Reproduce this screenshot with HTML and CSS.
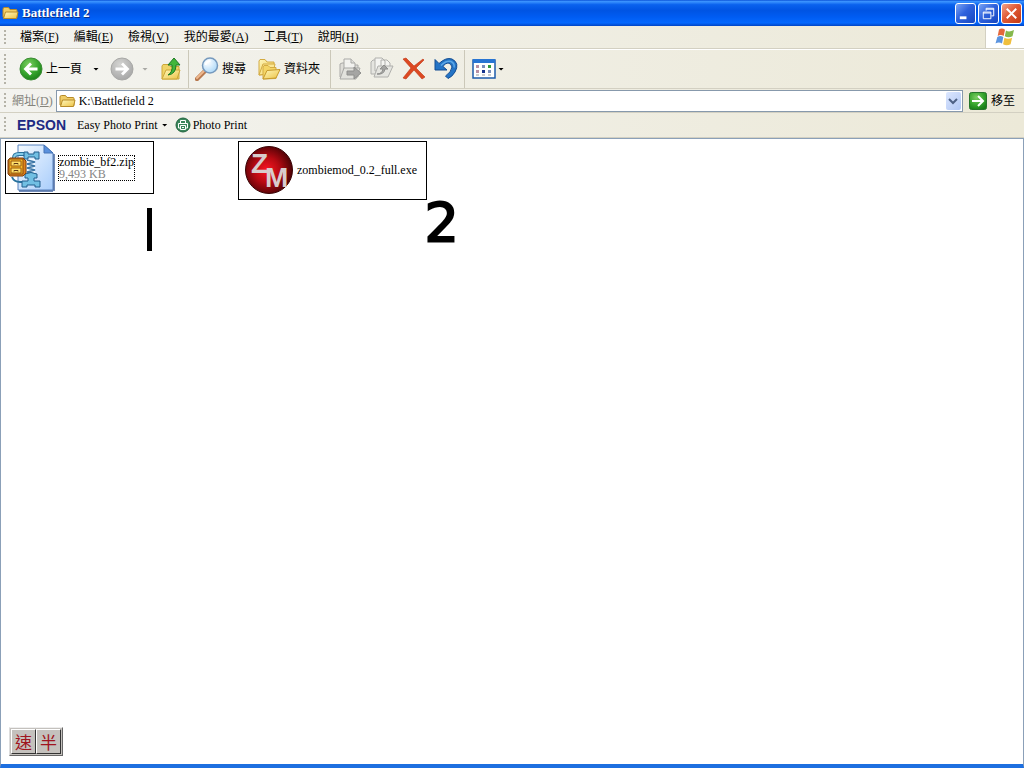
FILE: index.html
```html
<!DOCTYPE html>
<html lang="zh-Hant">
<head>
<meta charset="utf-8">
<meta name="viewport" content="width=device-width, initial-scale=1">
<title>Battlefield 2</title>
<link rel="stylesheet" href="styles.css">
</head>
<body>
<svg class="defs" width="0" height="0" aria-hidden="true">
  <defs>
    <linearGradient id="gold" x1="0" y1="0" x2="1" y2="1"><stop offset="0" stop-color="#fff8bd"/><stop offset="1" stop-color="#ecc244"/></linearGradient>
    <radialGradient id="green" cx=".4" cy=".3" r=".75"><stop offset="0" stop-color="#7cce61"/><stop offset=".6" stop-color="#35a32c"/><stop offset="1" stop-color="#197d18"/></radialGradient>
    <radialGradient id="grey" cx=".4" cy=".3" r=".75"><stop offset="0" stop-color="#d4d4d2"/><stop offset="1" stop-color="#a5a5a5"/></radialGradient>
    <radialGradient id="lens" cx=".35" cy=".3" r=".8"><stop offset="0" stop-color="#fff"/><stop offset="1" stop-color="#a5d5f8"/></radialGradient>
    <linearGradient id="page" x1="0" y1="0" x2="1" y2="1"><stop offset="0" stop-color="#f4faff"/><stop offset="1" stop-color="#a9cdfb"/></linearGradient>
    <radialGradient id="red" cx=".45" cy=".5" r=".55"><stop offset="0" stop-color="#fa1620"/><stop offset=".5" stop-color="#b50a12"/><stop offset="1" stop-color="#4c0205"/></radialGradient>
    <symbol id="folder" viewBox="0 0 17 14">
      <path d="M1 11V3q0-1.500 1.500-1.500h4l1.500 2h6q1 0 1 1v7z" fill="#f0cd66" stroke="#b78b28"/>
      <path d="M1.500 12.500 3.500 6h12.500l-1.500 6.500z" fill="url(#gold)" stroke="#b78b28"/>
    </symbol>
  </defs>
</svg>

<div class="window">
  <header class="titlebar">
    <svg class="title-icon" viewBox="0 0 17 14"><use href="#folder"/></svg>
    <h1 class="title">Battlefield 2</h1>
    <div class="controls">
      <button class="control" aria-label="最小化"><svg viewBox="0 0 20 20"><path d="M4 13h7v3H4z" fill="#fff"/></svg></button>
      <button class="control" aria-label="還原"><svg viewBox="0 0 20 20" fill="none" stroke="#fff"><path d="M7.500 7V4.500h8v8H13M7.500 5.500h8M4.500 8.500h8v7h-8zM4.500 9.500h8"/></svg></button>
      <button class="control close" aria-label="關閉"><svg viewBox="0 0 20 20"><path d="m5 5 10 10M15 5 5 15" stroke="#fff" stroke-width="2"/></svg></button>
    </div>
  </header>

  <nav class="menubar">
    <span class="grip"></span>
    <div class="menus">
      <button class="menu">檔案(<u>F</u>)</button>
      <button class="menu">編輯(<u>E</u>)</button>
      <button class="menu">檢視(<u>V</u>)</button>
      <button class="menu">我的最愛(<u>A</u>)</button>
      <button class="menu">工具(<u>T</u>)</button>
      <button class="menu">說明(<u>H</u>)</button>
    </div>
    <div class="flag">
      <svg viewBox="0 0 20 18">
        <path d="M4 1.500q3-2 6 .2L8.700 8q-3-2-6 0z" fill="#e4683c"/>
        <path d="M11 2.500q3 2 8-.5l-1.500 6.200q-4 2-7.700 0z" fill="#85b84c"/>
        <path d="M2.300 9q3-2 6 0L7 15.500q-3-2-6.500 0z" fill="#5b94df"/>
        <path d="M9.400 9.800q3.600 2 7.700 0l-1.500 6.400q-4 2-7.500 0z" fill="#f0bf3d"/>
      </svg>
    </div>
  </nav>

  <div class="toolbar">
    <span class="grip"></span>
    <div class="group nav-group">
      <button class="tool"><svg class="icon" viewBox="0 0 24 24"><circle cx="12" cy="12" r="11" fill="url(#green)" stroke="#3c8c34"/><path d="M18.500 12H7M12 6.500 6.500 12l5.500 5.500" fill="none" stroke="#fff" stroke-width="2.800"/></svg>上一頁</button>
      <button class="drop" aria-label="上一頁清單"></button>
      <button class="tool" aria-label="下一頁" disabled><svg class="icon" viewBox="0 0 24 24"><circle cx="12" cy="12" r="11" fill="url(#grey)" stroke="#a8a8a6"/><path d="M5.500 12H17M12 6.500l5.500 5.500-5.500 5.500" fill="none" stroke="#fff" stroke-width="2.800"/></svg></button>
      <button class="drop faded" aria-label="下一頁清單" disabled></button>
      <button class="tool up" aria-label="上層"><svg class="icon" viewBox="0 0 24 24"><path d="M3 22V9l1-1.500h5l2 2h9V22z" fill="#f0d468" stroke="#cda739"/><path d="m3 22 4-9h14l-3 9z" fill="url(#gold)" stroke="#cda739"/><path d="M9 18q5-3 4-10H9l6-7 6 7h-4q0 9-8 10z" fill="#42b63b" stroke="#1e7922"/></svg></button>
    </div>
    <div class="group find-group">
      <button class="tool"><svg class="icon" viewBox="0 0 24 24"><path d="m10 14-8 8" stroke="#b87950" stroke-width="4.500" stroke-linecap="round"/><path d="m9 14-7 7" stroke="#efb98e" stroke-width="2" stroke-linecap="round"/><circle cx="15" cy="8.500" r="7.500" fill="url(#lens)" stroke="#7699bd" stroke-width="1.500"/><path d="M10.500 8q1-4 5-4" fill="none" stroke="#fff" stroke-width="2"/></svg>搜尋</button>
      <button class="tool"><svg class="icon" viewBox="0 0 24 24"><path d="M2 18V4l1-1.500h5l2 2.500h7v12z" fill="url(#gold)" stroke="#d3ab42"/><path d="m2 18 4-11h12l-2 9z" fill="#fbe793" stroke="#d3ab42"/><path d="M6 22V10l1-1.500h4l2 2h6v11z" fill="#f4d566" stroke="#d3ab42"/><path d="m6 22 4-8.500 13-1L19 21z" fill="url(#gold)" stroke="#c79a2c"/></svg>資料夾</button>
    </div>
    <div class="group edit-group">
      <button class="tool" aria-label="移至資料夾" disabled><svg class="icon" viewBox="0 0 24 24" stroke="#a9a9a6"><path d="M2 20V7l2-1h4l2 2h10v12z" fill="#deddd8"/><path d="M6 15V2h7l4 4v9z" fill="#f2f2ef"/><path d="M13 2v4h4M2 22l4-11h16l-4 11z" fill="#e2e2dd"/><path d="M9 14h7v-4l7 6-7 6v-4H9z" fill="#a5a5a3" stroke="#8e8e8c"/></svg></button>
      <button class="tool" aria-label="複製到資料夾" disabled><svg class="icon" viewBox="0 0 24 24" stroke="#b0b0ad"><path d="M1 17V5l2-2h5v14z" fill="#e5e5e0"/><path d="M5 14V1h7l3 3v10zM11 13V3h6l3 3v9z" fill="#f4f4f1"/><path d="M4 20 8 9h15l-5 11z" fill="#e5e5e0"/><path d="M7 17q5 0 6-5h-3l4-4 4 4h-3q-1 6-8 5z" fill="#a5a5a3" stroke="#8e8e8c"/></svg></button>
      <button class="tool" aria-label="刪除"><svg class="icon" viewBox="0 0 24 24"><path d="M1 2 4 1l8 8 9-7 1 1-8 8 9 9-3 2-8-9-8 9-3-1 8-10z" fill="#dd4922" stroke="#bd3413" stroke-width=".6"/></svg></button>
      <button class="tool" aria-label="復原"><svg class="icon" viewBox="0 0 24 24"><path d="M1 2.500 5 6.500Q12 0 18 2q8 4 3 13-3 5-7 6.500L11.500 19q6-4 6.500-9-1-4-4-4-3 0-5 3.500l4 3.500H1z" fill="#2474c6" stroke="#134d92"/><path d="M7 8.500q5-5 10-4 4 2 3 6" fill="none" stroke="#5ba7e6" stroke-width="1.500"/></svg></button>
    </div>
    <div class="group view-group">
      <button class="tool view" aria-label="檢視"><svg class="icon" viewBox="0 0 24 24"><path d="M1 3h22v18H1z" fill="#fff" stroke="#1e5cab" stroke-width="1.500"/><path d="M1 2h22v4H1z" fill="#2875d3"/><path d="M4 8h3v3H4zM4 13h3v3H4z" fill="#b990a4"/><path d="M10 8h3v3h-3zM16 13h3v3h-3z" fill="#798dbb"/><path d="M16 8h3v3h-3z" fill="#319a3b"/><path d="M10 13h3v3h-3z" fill="#18358e"/><path d="M4 18h3M10 18h3M16 18h3" stroke="#999"/></svg><span class="arrow"></span></button>
    </div>
  </div>

  <form class="addressbar">
    <span class="grip"></span>
    <label class="address-label" for="address">網址(<u>D</u>)</label>
    <div class="address-box">
      <svg class="title-icon" viewBox="0 0 17 14"><use href="#folder"/></svg>
      <input class="address-input" id="address" type="text" value="K:\Battlefield 2">
      <button class="address-drop" type="button" aria-label="網址清單"><svg viewBox="0 0 14 16"><path d="m3 6 4 4 4-4" fill="none" stroke="#4d6185" stroke-width="2"/></svg></button>
    </div>
    <button class="go" type="button"><svg viewBox="0 0 18 18"><rect x=".5" y=".5" width="17" height="17" rx="2" fill="url(#green)" stroke="#27752b"/><path d="M3 9h10M9 4l5 5-5 5" fill="none" stroke="#fff" stroke-width="2"/></svg>移至</button>
  </form>

  <div class="printbar">
    <span class="grip"></span>
    <strong class="epson">EPSON</strong>
    <button class="print-button">Easy Photo Print<span class="arrow"></span></button>
    <button class="print-button photo"><svg viewBox="0 0 16 16"><circle cx="8" cy="8" r="7" fill="#39855a" stroke="#21633e"/><g fill="none" stroke="#fff"><path d="M5.500 6V3.500h5V6M5 11H3.500V6.500h9V11H11M5.500 8.500h5v4h-5zM7 10.500h2"/></g></svg>Photo Print</button>
  </div>

  <main class="content">
    <div class="file zip">
      <svg class="file-icon" viewBox="0 0 48 48">
        <path d="M11 1h26l9 8v37H11z" fill="url(#page)" stroke="#5781bd"/>
        <path d="M46 47H12M47 10v37" stroke="#4465a0" stroke-width="1.500"/>
        <path d="M37 1v8h9z" fill="#5b91dd" stroke="#4674b7"/>
        <path d="M7 14q0-4 5-4h8" fill="none" stroke="#28729d" stroke-width="4"/>
        <path d="M7 14q0-4 5-4h8" fill="none" stroke="#84cbe8" stroke-width="2"/>
        <path d="M5 33q2 5 8 5h7" fill="none" stroke="#28729d" stroke-width="2"/>
        <path d="M20 15h8v15h-8z" fill="#eef8ff"/>
        <path d="m20 16 8 2-8 2 8 2-8 2 8 2-8 2 8 2" fill="none" stroke="#3c75a6" stroke-width="1.500"/>
        <g fill="#71bfe3" stroke="#235f8d"><path d="M17 8h4v2h6V8h5v7h-4v-2h-7v2h-4z"/><path d="M18 30q6-3 12 0v4h-3v3h6v6h-5v-2h-8v2h-5v-6h6v-3h-3z"/></g>
        <path d="M3 14h13l3 3v12l-3 3H3l-2-2V16z" fill="#df831c" stroke="#80400c"/>
        <path d="M2 15h14v15H2z" fill="#f7ba29" stroke="#8c4b10"/>
        <path d="M4 17h10v5H4zM4 24h10v5H4z" fill="#ffe16a" stroke="#97570d"/>
        <path d="M7 20.500v-1h4v1M7 27.500v-1h4v1" fill="none" stroke="#5c3614"/>
      </svg>
      <div class="file-text focused"><div>zombie_bf2.zip</div><div class="size">9,493 KB</div></div>
      <span class="mark-one" role="img" aria-label="1"></span>
    </div>
    <div class="file exe">
      <svg class="file-icon" viewBox="0 0 48 48"><circle cx="24" cy="24" r="23.500" fill="url(#red)" stroke="#390305"/>
        <text class="zm-letter" x="6" y="27">Z</text><text class="zm-letter" x="20" y="41">M</text></svg>
      <div class="file-text">zombiemod_0.2_full.exe</div>
      <span class="mark-two">2</span>
    </div>
    <div class="ime"><button class="ime-key">速</button><button class="ime-key">半</button></div>
  </main>
</div>
</body>
</html>
```
FILE: styles.css
```css
* { box-sizing: border-box; }

body {
  margin: 0;
  font: 12px/14px "Liberation Serif", "Noto Sans CJK TC", serif;
  color: #000;
}

button {
  padding: 0;
  border: 0;
  background: none;
  font: inherit;
  color: inherit;
  white-space: nowrap;
}

svg { display: block; flex: none; }
.defs { position: absolute; }

.window {
  display: flex;
  flex-direction: column;
  min-height: 100vh;
  background: linear-gradient(90deg, #f3f3ef, #ece9d8);
}

.titlebar {
  display: flex;
  align-items: center;
  height: 26px;
  padding: 0 2px;
  background: linear-gradient(#0b53d8 0, #3b94ff 6%, #0a62ee 18%, #0054e3 40%, #005cf2 65%, #0468fe 88%, #0144c4 100%);
}

.title-icon { width: 17px; height: 14px; }

.title {
  flex: 1;
  margin: 0 0 0 3px;
  font-size: 13px;
  line-height: 16px;
  color: #fff;
  text-shadow: 1px 1px #0a2f86;
}

.controls { display: flex; gap: 2px; }

.control {
  width: 21px;
  height: 21px;
  border: 1px solid #fff;
  border-radius: 3px;
  background: linear-gradient(135deg, #7ba4f4, #2f62dd 45%, #1747c0);
}

.control svg { width: 19px; height: 19px; }
.close { background: linear-gradient(135deg, #f2a38a, #e05a36 45%, #c33a14); }

.menubar, .toolbar, .addressbar, .printbar {
  display: flex;
  align-items: center;
  border-bottom: 1px solid #d3d0c2;
}

.grip {
  flex: none;
  align-self: stretch;
  width: 2px;
  margin: 4px 0 4px 4px;
  background: repeating-linear-gradient(#b5b3a8 0 2px, transparent 2px 4px);
}

.menubar { height: 23px; }
.menus { display: flex; flex: 1; gap: 15px; padding-left: 14px; }

.flag {
  display: flex;
  align-items: center;
  justify-content: center;
  align-self: stretch;
  width: 39px;
  border-left: 1px solid #d3d0c2;
  background: #fff;
}

.flag svg { width: 20px; height: 18px; }

.toolbar { height: 40px; border-top: 1px solid #fff; }
.group { display: flex; align-items: center; align-self: stretch; }
.group + .group { border-left: 1px solid #cbc8b9; }
.icon { width: 24px; height: 24px; }
.tool { display: flex; align-items: center; gap: 3px; }
.nav-group { padding: 0 5px 0 13px; }
.up { margin-left: 6px; }
.find-group { gap: 11px; padding: 0 10px 0 6px; }
.edit-group { gap: 8px; padding: 0 6px 0 7px; }
.view-group { padding-left: 7px; }

.drop {
  display: flex;
  align-items: center;
  justify-content: center;
  width: 28px;
  height: 24px;
}

.faded { width: 16px; margin-left: 3px; opacity: .3; }

.drop::before, .arrow {
  content: "";
  width: 6px;
  height: 3px;
  background: #000;
  clip-path: polygon(0 0, 100% 0, 50% 100%);
}

.view { gap: 2px; }

.addressbar { height: 24px; }
.address-label { padding: 0 3px 0 6px; color: #85847c; }

.address-box {
  display: flex;
  flex: 1;
  align-items: center;
  height: 22px;
  padding: 1px 1px 1px 2px;
  border: 1px solid #8799ac;
  background: #fff;
}

.address-input {
  flex: 1;
  min-width: 0;
  padding: 0 3px;
  border: 0;
  outline: 0;
  background: none;
  font: inherit;
}

.address-drop {
  display: flex;
  align-items: center;
  justify-content: center;
  width: 15px;
  height: 18px;
  border-radius: 2px;
  background: linear-gradient(135deg, #dce7ff, #b1c7f4);
}

.address-drop svg { width: 14px; height: 16px; }
.go { display: flex; align-items: center; gap: 4px; padding: 0 9px 0 6px; }
.go svg { width: 18px; height: 18px; }

.printbar { height: 25px; }

.epson {
  padding-left: 11px;
  font: bold 14px/16px "Liberation Sans", sans-serif;
  color: #202a83;
}

.print-button { display: flex; align-items: center; gap: 4px; margin-left: 11px; }
.photo { gap: 2px; margin-left: 7px; }
.photo svg { width: 16px; height: 16px; }

.content {
  position: relative;
  display: flex;
  flex: 1;
  align-items: flex-start;
  gap: 84px;
  padding: 2px 4px;
  border: 1px solid #8ba0b8;
  border-bottom: 4px solid #1d6fe0;
  background: #fff;
}

.file {
  position: relative;
  display: flex;
  align-items: center;
  gap: 4px;
  border: 1px solid #000;
}

.zip { padding: 2px 19px 1px 1px; }
.exe { padding: 4px 9px 5px 6px; }
.file-icon { width: 48px; height: 48px; }
.file-text { line-height: 12px; }
.focused { outline: 1px dotted #000; }
.size { color: #858585; }

.zm-letter {
  font: bold 28px "Liberation Sans", sans-serif;
  fill: #d8cccc;
}

/* Pen notes drawn over the file list */
.mark-one {
  position: absolute;
  top: 66px;
  right: 1px;
  width: 5px;
  height: 43px;
  background: #000;
}

.mark-two {
  position: absolute;
  top: 54px;
  right: -33px;
  font: 54px/54px "DejaVu Sans", sans-serif;
  -webkit-text-stroke: 2px #000;
}

.ime {
  position: absolute;
  bottom: 8px;
  left: 8px;
  display: flex;
  padding: 1px;
  border: 1px solid;
  border-color: #eee #666 #666 #ddd;
  background: #c4c1bd;
}

.ime-key {
  width: 25px;
  height: 25px;
  border: 1px solid;
  border-color: #fff #333 #333 #fff;
  font: 17px/22px "Noto Sans CJK TC", sans-serif;
  color: #a01420;
}
```
